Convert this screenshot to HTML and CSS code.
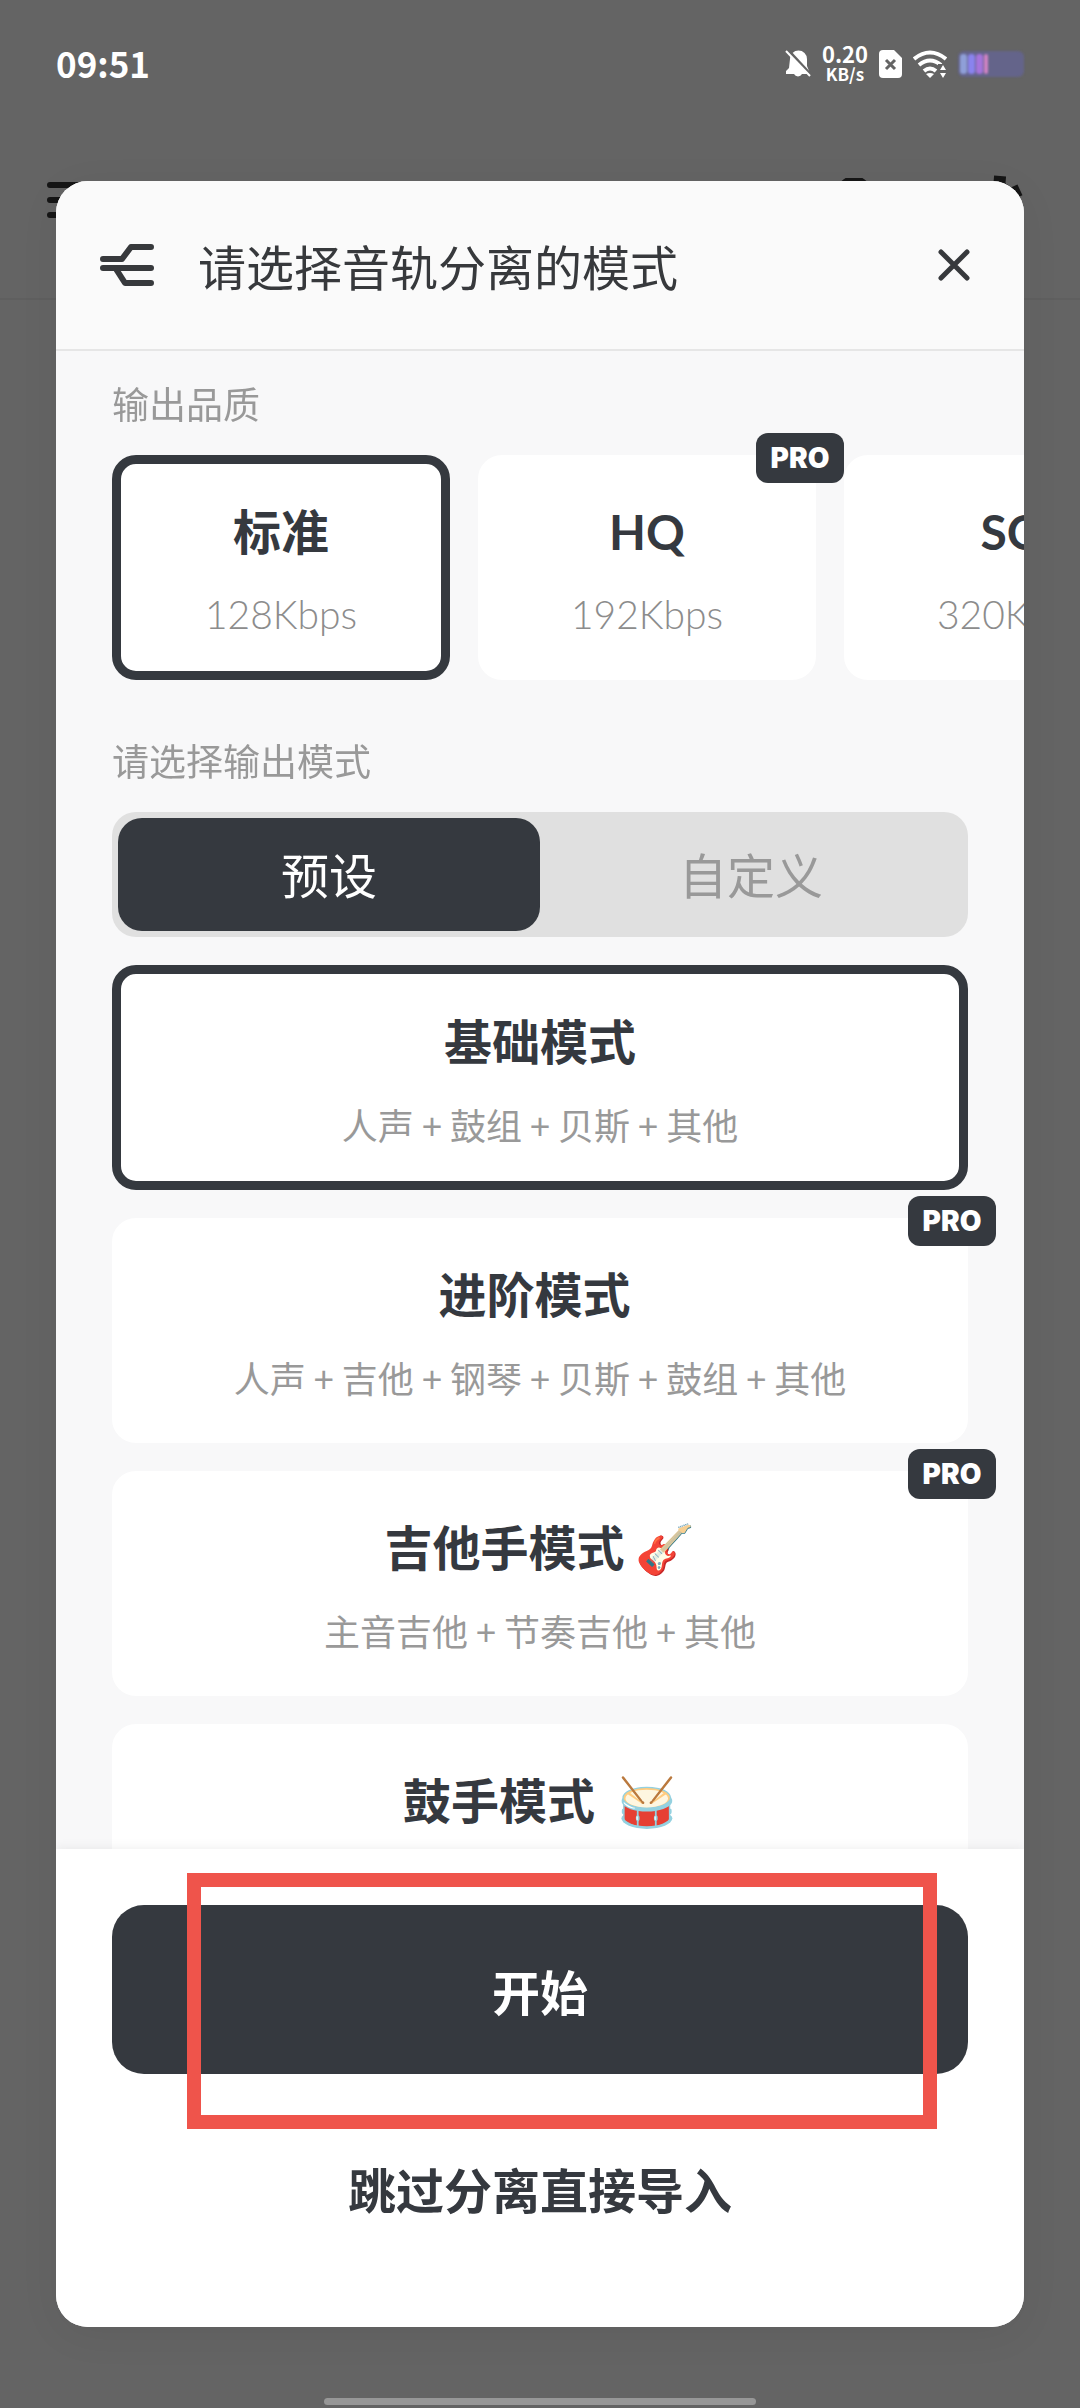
FILE: index.html
```html
<!DOCTYPE html>
<html lang="zh-CN">
<head>
    <meta charset="UTF-8">
    <meta name="viewport" content="width=device-width, initial-scale=1.0">
    <title>音轨分离</title>
    <link rel="stylesheet" href="styles.css">
</head>
<body>

    <!-- 背景页面 -->
    <div class="page">
        <div class="status-bar">
            <span class="clock">09:51</span>
            <div class="status-icons">
                <svg class="icon-bell" viewBox="0 0 26 30" width="26" height="30">
                    <path d="M5 10 A8.500 8.500 0 0 1 22 10 V17 L24 22 V25 H17 A4.500 4.500 0 0 1 9 25 H1 V22 L4 19 Z" fill="#fff"/>
                    <path d="M2 0 L27 27" stroke="#646464" stroke-width="3"/>
                    <path d="M1 2 L25 27" stroke="#fff" stroke-width="2"/>
                </svg>
                <div class="net-speed">
                    <span class="net-value">0.20</span>
                    <span class="net-unit">KB/s</span>
                </div>
                <svg class="icon-sim" viewBox="0 0 23 30" width="23" height="30">
                    <path d="M4 1 H15 L23 9 V25 Q23 29 19 29 H4 Q0 29 0 25 V5 Q0 1 4 1 Z" fill="#fff"/>
                    <path d="M7 11 L16 20 M16 11 L7 20" stroke="#646464" stroke-width="3"/>
                </svg>
                <svg class="icon-wifi" viewBox="0 0 34 30" width="34" height="30">
                    <g fill="none" stroke="#fff" stroke-width="4">
                        <path d="M1 10 Q17 -3 33 10"/>
                        <path d="M6 16 Q17 7 28 16"/>
                        <path d="M11 22 Q17 17 23 22"/>
                    </g>
                    <path d="M13 25 Q17 23 21 25 L17 29 Z" fill="#fff"/>
                    <path d="M25 15 H34 V30 H25 Z" fill="#646464"/>
                    <path d="M27 21 L30 16 L33 21 Z M27 24 L30 29 L33 24 Z" fill="#fff"/>
                </svg>
                <div class="battery">
                    <i class="cell cell-1"></i>
                    <i class="cell cell-2"></i>
                    <i class="cell cell-3"></i>
                    <i class="cell cell-4"></i>
                </div>
            </div>
        </div>
        <div class="app-bar">
            <svg viewBox="0 0 44 44" width="44" height="44">
                <path d="M6 7 H41 M6 22 H41 M6 37 H41" stroke="#161616" stroke-width="6" stroke-linecap="round"/>
            </svg>
            <div class="app-tools">
                <svg viewBox="0 0 44 44" width="44" height="44">
                    <circle cx="18" cy="16" r="15" fill="none" stroke="#161616" stroke-width="6"/>
                    <path d="M29 27 L40 38" stroke="#161616" stroke-width="6"/>
                </svg>
                <svg viewBox="0 0 60 60" width="60" height="60">
                    <g fill="none" stroke="#161616" transform="rotate(5 30 30)">
                        <circle cx="30" cy="30" r="14" stroke-width="8"/>
                        <path d="M30 6 V14 M30 46 V54 M9 18 L16 22 M44 38 L51 42 M51 18 L44 22 M16 38 L9 42" stroke-width="12"/>
                    </g>
                </svg>
            </div>
        </div>
    </div>

    <!-- 弹窗 -->
    <div class="overlay">
        <div class="modal" role="dialog" aria-labelledby="modalTitle">
            <div class="modal-header">
                <svg class="icon-split" viewBox="0 0 54 44" width="54" height="44">
                    <g fill="none" stroke="#37393c" stroke-width="6" stroke-linecap="round" stroke-linejoin="round">
                        <path d="M3 16 H22 L31 4 H51"/>
                        <path d="M3 25 H51"/>
                        <path d="M16 26 L25 40 H51"/>
                    </g>
                </svg>
                <h1 class="modal-title" id="modalTitle">请选择音轨分离的模式</h1>
                <button class="close-btn" aria-label="关闭">
                    <svg viewBox="0 0 32 32" width="32" height="32">
                        <path d="M3 3 L29 29 M29 3 L3 29" stroke="#37393c" stroke-width="5" stroke-linecap="round"/>
                    </svg>
                </button>
            </div>

            <div class="modal-body">
                <h2 class="label">输出品质</h2>
                <div class="quality-list">
                    <label class="card">
                        <input type="radio" name="quality" value="128" checked>
                        <span class="card-title">标准</span>
                        <span class="card-rate">128Kbps</span>
                    </label>
                    <label class="card">
                        <input type="radio" name="quality" value="192">
                        <span class="card-title">HQ</span>
                        <span class="card-rate">192Kbps</span>
                        <span class="badge">PRO</span>
                    </label>
                    <label class="card">
                        <input type="radio" name="quality" value="320">
                        <span class="card-title">SQ</span>
                        <span class="card-rate">320Kbps</span>
                    </label>
                </div>

                <h2 class="label">请选择输出模式</h2>
                <div class="tabs">
                    <button class="tab active">预设</button>
                    <button class="tab">自定义</button>
                </div>

                <div class="mode-list">
                    <label class="card">
                        <input type="radio" name="mode" value="basic" checked>
                        <span class="card-title">基础模式</span>
                        <span class="card-desc">人声 + 鼓组 + 贝斯 + 其他</span>
                    </label>
                    <label class="card">
                        <input type="radio" name="mode" value="advanced">
                        <span class="card-title">进阶模式&nbsp;</span>
                        <span class="card-desc">人声 + 吉他 + 钢琴 + 贝斯 + 鼓组 + 其他</span>
                        <span class="badge">PRO</span>
                    </label>
                    <label class="card">
                        <input type="radio" name="mode" value="guitar">
                        <span class="card-title">吉他手模式 🎸</span>
                        <span class="card-desc">主音吉他 + 节奏吉他 + 其他</span>
                        <span class="badge">PRO</span>
                    </label>
                    <label class="card">
                        <input type="radio" name="mode" value="drum">
                        <span class="card-title">鼓手模式 &nbsp;🥁</span>
                    </label>
                </div>
            </div>

            <div class="modal-footer">
                <button class="start-btn">开始</button>
                <button class="skip-btn">跳过分离直接导入</button>
                <div class="highlight"></div>
            </div>
        </div>
    </div>

    <div class="home-bar"></div>

</body>
</html>
```
FILE: styles.css
```css
* {
    box-sizing: border-box;
}

body {
    margin: 0;
    font-family: Lato, "Noto Sans CJK SC", sans-serif;
    color: #35393f;
    background-color: #646464;
}

h1, h2 {
    margin: 0;
    font-weight: 400;
}

button {
    font-family: inherit;
    border: none;
    padding: 0;
    background: none;
    cursor: pointer;
}

svg {
    display: block;
}

.page {
    height: 100vh;
    overflow: hidden;
}

/* 状态栏 */
.status-bar {
    display: flex;
    align-items: center;
    justify-content: space-between;
    height: 128px;
    padding: 0 56px;
    color: white;
    font-family: "Noto Sans CJK SC", sans-serif;
}

.clock {
    padding-bottom: 4px;
    font-size: 35px;
    font-weight: 700;
}

.status-icons {
    display: flex;
    align-items: center;
    gap: 11px;
}

.net-speed {
    display: flex;
    flex-direction: column;
    align-items: center;
    padding-bottom: 2px;
    font-weight: 700;
}

.net-value {
    font-size: 22px;
    line-height: 22px;
}

.net-unit {
    font-size: 17px;
    line-height: 20px;
}

.battery {
    display: flex;
    align-items: center;
    gap: 1px;
    width: 66px;
    height: 26px;
    padding-left: 2px;
    border-radius: 6px;
    background-color: #64648a;
    filter: blur(1px);
}

.cell {
    width: 7px;
    height: 20px;
    border-radius: 3px;
}

.cell-1 { background-color: #8f9fd8; }
.cell-2 { background-color: #8a83ee; }
.cell-3 { background-color: #a674dc; }
.cell-4 { width: 4px; background-color: #d083c4; }

.app-bar {
    display: flex;
    align-items: center;
    justify-content: space-between;
    height: 172px;
    padding: 0 52px 26px 44px;
    border-bottom: 2px solid #5f5f5f;
}

.app-tools {
    display: flex;
    align-items: center;
    gap: 88px;
}

/* 弹窗 */
.overlay {
    position: fixed;
    inset: 0;
    display: flex;
    padding: 181px 56px 81px;
}

.modal {
    flex: 1;
    min-width: 0;
    display: flex;
    flex-direction: column;
    overflow: hidden;
    border-radius: 32px;
    background-color: #f8f8f9;
    box-shadow: 0 8px 40px rgba(0, 0, 0, 0.06);
}

.modal-header {
    display: flex;
    align-items: center;
    height: 170px;
    padding: 0 54px 0 44px;
    background-color: #fafafa;
    border-bottom: 2px solid #e6e6e6;
}

.modal-title {
    flex: 1;
    margin-left: 44px;
    padding-top: 6px;
    font-size: 48px;
    line-height: 64px;
    color: #37393c;
}

.modal-body {
    flex: 1;
    min-height: 0;
    padding: 28px 0 0 56px;
    overflow: hidden auto;
    scrollbar-width: none;
}

.label {
    font-size: 37px;
    line-height: 52px;
    color: #999;
}

.quality-list {
    display: flex;
    gap: 28px;
    padding: 24px 56px 56px 0;
    overflow-x: auto;
    scrollbar-width: none;
}

.quality-list .card {
    flex: 0 0 338px;
}

.card {
    position: relative;
    display: flex;
    flex-direction: column;
    align-items: center;
    gap: 24px;
    height: 225px;
    padding-top: 36px;
    border: 9px solid white;
    border-radius: 24px;
    background-color: white;
    cursor: pointer;
}

.card:has(input:checked) {
    border-color: #35393f;
}

.card input {
    position: absolute;
    opacity: 0;
}

.card-title {
    font-size: 48px;
    font-weight: 700;
    line-height: 64px;
}

.card-desc {
    font-size: 36px;
    line-height: 52px;
    color: #999;
}

.card-rate {
    font-size: 39px;
    font-weight: 300;
    line-height: 52px;
    color: #8c8c8c;
}

.badge {
    position: absolute;
    top: -31px;
    right: -37px;
    width: 88px;
    border-radius: 12px;
    background-color: #35393f;
    color: white;
    font-family: Inter, sans-serif;
    font-size: 28px;
    font-weight: 900;
    line-height: 50px;
    text-align: center;
}

/* 预设 / 自定义 */
.tabs {
    display: flex;
    height: 125px;
    margin: 24px 56px 28px 0;
    padding: 6px;
    border-radius: 24px;
    background-color: #e0e0e0;
}

.tab {
    flex: 1;
    padding-bottom: 4px;
    border-radius: 24px;
    font-size: 48px;
    color: #999;
}

.tab.active {
    background-color: #35393f;
    color: white;
}

.mode-list {
    display: flex;
    flex-direction: column;
    gap: 28px;
    padding-right: 56px;
    font-family: "Noto Sans CJK SC", sans-serif;
}

.mode-list .card {
    gap: 27px;
    padding-top: 33px;
}

/* 底部按钮 */
.modal-footer {
    position: relative;
    display: flex;
    flex-direction: column;
    padding: 56px 56px 92px;
    background-color: white;
    box-shadow: 0 -2px 10px rgba(0, 0, 0, 0.06);
}

.start-btn {
    height: 169px;
    border-radius: 32px;
    background-color: #35393f;
    color: white;
    font-size: 48px;
    font-weight: 700;
}

.skip-btn {
    margin-top: 72px;
    font-size: 48px;
    font-weight: 700;
    line-height: 89px;
    color: #35393f;
}

.highlight {
    position: absolute;
    top: 24px;
    left: 131px;
    right: 87px;
    height: 256px;
    border: 14px solid #ef544b;
    pointer-events: none;
}

.home-bar {
    position: fixed;
    bottom: 3px;
    left: 30%;
    right: 30%;
    height: 7px;
    border-radius: 4px;
    background-color: #979797;
}
```
